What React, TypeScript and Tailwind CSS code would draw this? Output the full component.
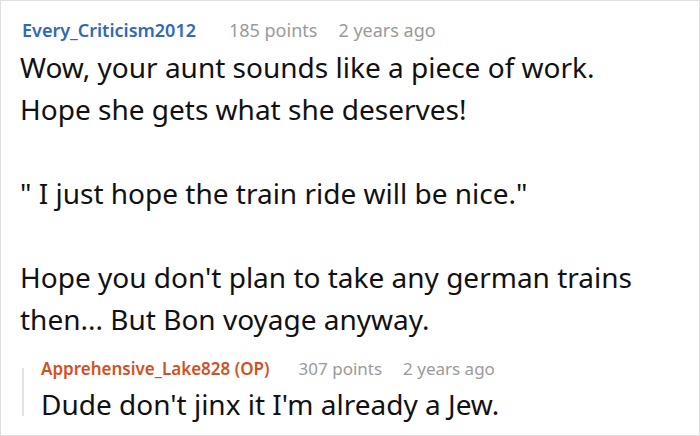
const body = "font-['Noto_Sans',sans-serif]";

export default function App() {
  return (
    <div className={`w-[700px] h-[436px] overflow-hidden bg-white border border-[#e0e0e0] ${body}`}>
      <div className="pl-[19px] pt-[16px]">
        {/* comment header */}
        <div className="flex items-baseline h-[26px] leading-[26px] text-[18px]">
          <span className="font-semibold text-[#3168b9] ml-[2px]">Every_Criticism2012</span>
          <span className="text-[#9a9a9a] ml-[33px]">185 points</span>
          <span className="text-[#9a9a9a] ml-[21px]">2 years ago</span>
        </div>
        {/* comment body */}
        <div className="mt-[3px] text-[28px] leading-[42px] text-[#111]">
          <p>Wow, your aunt sounds like a piece of work.</p>
          <p>Hope she gets what she deserves!</p>
          <p className="h-[42px]"></p>
          <p>" I just hope the train ride will be nice."</p>
          <p className="h-[42px]"></p>
          <p>Hope you don't plan to take any german trains</p>
          <p>then... But Bon voyage anyway.</p>
        </div>
        {/* reply */}
        <div className="flex mt-[16px] ml-[2px]">
          <div className="w-[2px] bg-[#e2e2e2] mt-[12px] mb-[9px]"></div>
          <div className="ml-[17px]">
            <div className="flex items-baseline h-[26px] leading-[26px] text-[17px]">
              <span className="font-semibold text-[#d5501f]">Apprehensive_Lake828 (OP)</span>
              <span className="text-[#9a9a9a] ml-[29px]">307 points</span>
              <span className="text-[#9a9a9a] ml-[21px]">2 years ago</span>
            </div>
            <p className="mt-[1px] text-[28px] leading-[42px] text-[#111]">Dude don't jinx it I'm already a Jew.</p>
          </div>
        </div>
      </div>
    </div>
  );
}
